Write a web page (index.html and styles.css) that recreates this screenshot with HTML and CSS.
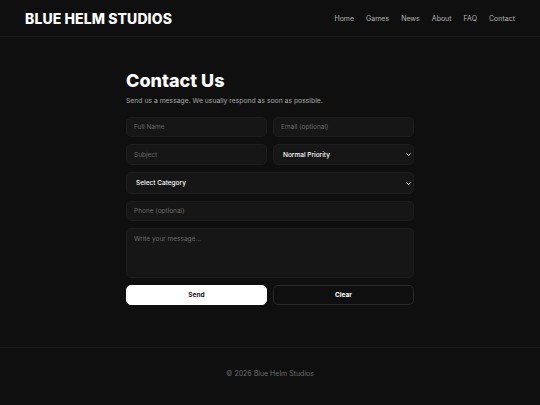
FILE: index.html
```html
<!DOCTYPE html>
<html lang="en">
<head>
<meta charset="utf-8">
<title>Contact Us - Blue Helm Studios</title>
<link rel="stylesheet" href="styles.css">
</head>
<body>
<header class="site-header">
  <div class="logo">BLUE HELM STUDIOS</div>
  <nav class="nav">
    <a href="#">Home</a>
    <a href="#">Games</a>
    <a href="#">News</a>
    <a href="#">About</a>
    <a href="#">FAQ</a>
    <a href="#">Contact</a>
  </nav>
</header>
<main class="main">
  <section class="contact">
    <h1 class="title">Contact Us</h1>
    <p class="subtitle">Send us a message. We usually respond as soon as possible.</p>
    <form class="form">
      <div class="row two">
        <input class="field" type="text" placeholder="Full Name">
        <input class="field" type="email" placeholder="Email (optional)">
      </div>
      <div class="row two mid">
        <input class="field" type="text" placeholder="Subject">
        <div class="select-wrap">
          <select class="field select">
            <option>Normal Priority</option>
          </select>
          <svg class="chev" viewBox="0 0 10 6" width="5" height="3"><path d="M1 1l4 4 4-4" fill="none" stroke="#fff" stroke-width="2"/></svg>
        </div>
      </div>
      <div class="select-wrap tall">
        <select class="field select">
          <option>Select Category</option>
        </select>
        <svg class="chev" viewBox="0 0 10 6" width="5" height="3"><path d="M1 1l4 4 4-4" fill="none" stroke="#fff" stroke-width="2"/></svg>
      </div>
      <input class="field" type="tel" placeholder="Phone (optional)">
      <textarea class="field area" placeholder="Write your message..."></textarea>
      <div class="row two">
        <button type="button" class="btn primary">Send</button>
        <button type="button" class="btn ghost">Clear</button>
      </div>
    </form>
  </section>
</main>
<footer class="site-footer">© 2026 Blue Helm Studios</footer>
</body>
</html>
```
FILE: styles.css
```css
* { box-sizing: border-box; }
html, body { margin: 0; padding: 0; }
body {
  background: #0f0f0f;
  color: #fff;
  font-family: Inter, "Liberation Sans", sans-serif;
  min-height: 405px;
}
.site-header {
  height: 37px;
  border-bottom: 1px solid #1b1b1b;
  display: flex;
  align-items: center;
  justify-content: space-between;
  padding: 0 25px 0 25px;
}
.logo {
  font-size: 14px;
  font-weight: 800;
  letter-spacing: 0.1px;
  color: #fff;
}
.nav { display: flex; gap: 12px; }
.nav a {
  color: #b4b4b4;
  text-decoration: none;
  font-size: 7px;
}
.main { padding: 33px 0 42px; }
.contact { width: 288px; margin: 0 auto; }
.title {
  margin: 0;
  font-size: 18px;
  line-height: 21.6px;
  font-weight: 800;
}
.subtitle {
  margin: 4px 0 12px;
  font-size: 6.8px;
  line-height: 9.8px;
  color: #a8a8a8;
}
.form { display: flex; flex-direction: column; gap: 7px; }
.row.two { display: grid; grid-template-columns: 1fr 1fr; gap: 6px; }
.field {
  width: 100%;
  height: 20px;
  background: #161616;
  border: 1px solid #1d1d1d;
  border-radius: 5px;
  color: #fff;
  font-family: inherit;
  font-size: 6.5px;
  padding: 0 7px;
  outline: none;
  margin: 0;
}
.row.mid .field { height: 21px; }
.field::placeholder { color: #6a6a6a; }
.select-wrap { position: relative; }
.select {
  -webkit-appearance: none;
  appearance: none;
  font-weight: 500;
  padding: 0 9px;
  display: block;
}
.select-wrap.tall .select { height: 22px; }
.chev {
  position: absolute;
  right: 3px;
  top: 50%;
  margin-top: -1.5px;
  display: block;
}
.area {
  height: 50px;
  padding: 6px 7px;
  resize: none;
  display: block;
}
.btn {
  height: 20px;
  border-radius: 5px;
  font-family: inherit;
  font-size: 6.5px;
  font-weight: 700;
  cursor: pointer;
}
.btn.primary { background: #fff; color: #111; border: 1px solid #fff; }
.btn.ghost { background: transparent; color: #fff; border: 1px solid #2a2a2a; }
.site-footer {
  border-top: 1px solid #1b1b1b;
  text-align: center;
  font-size: 7px;
  line-height: 10px;
  color: #6b6b6b;
  padding: 21px 0 32px;
}
```
